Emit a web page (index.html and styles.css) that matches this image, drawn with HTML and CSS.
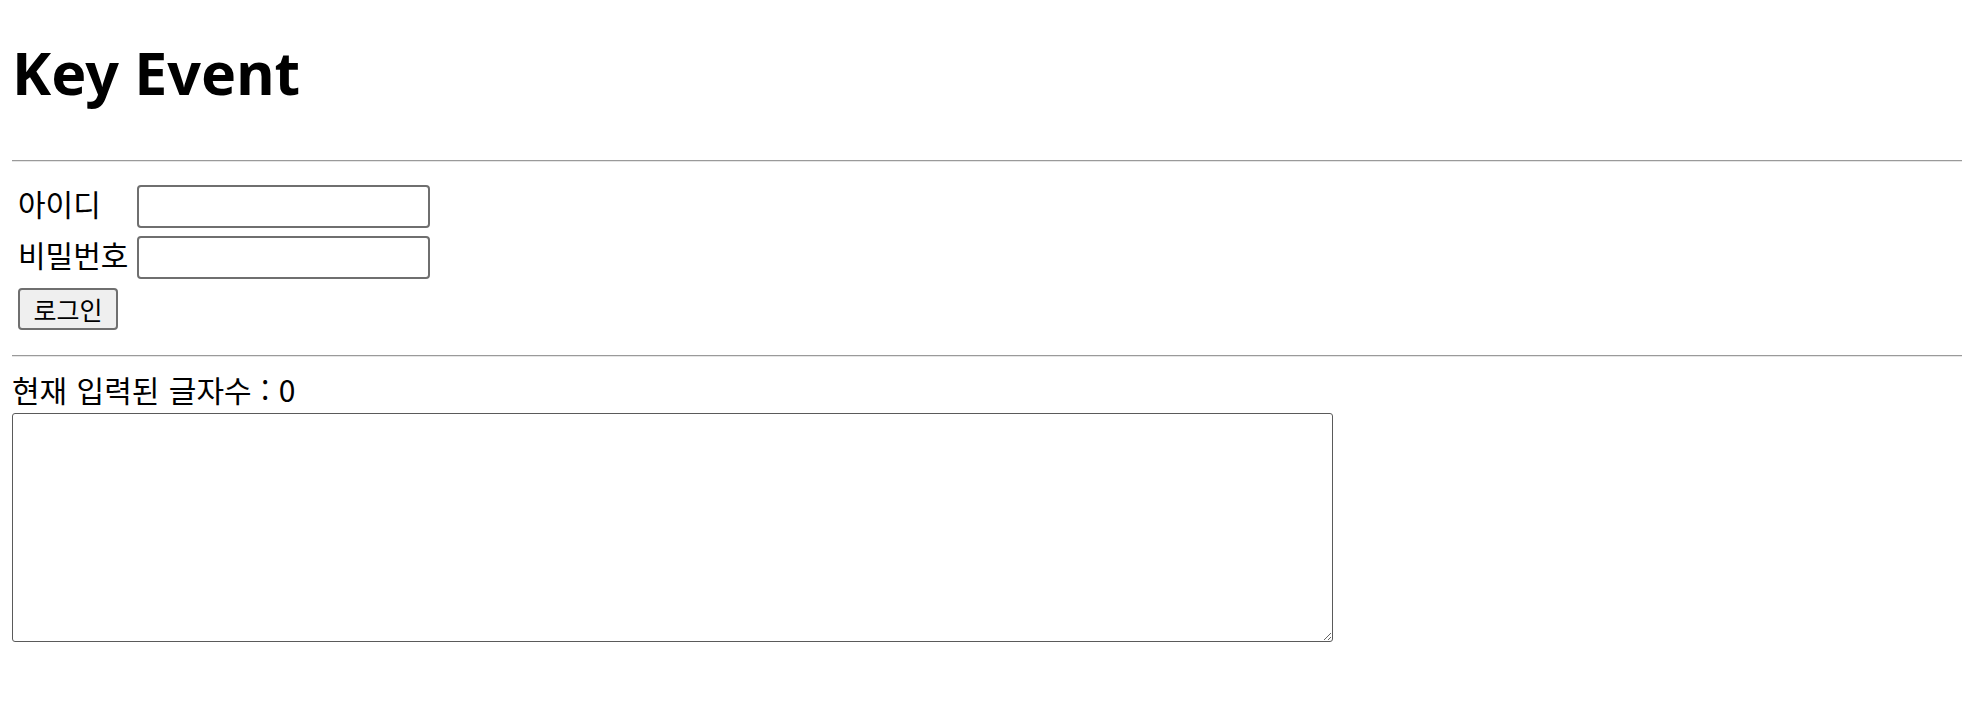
FILE: index.html
```html
<!DOCTYPE html>
<html lang="ko">
<head>
<meta charset="utf-8">
<title>Key Event</title>
<link rel="stylesheet" href="styles.css">
</head>
<body>
<h1 class="title">Key Event</h1>
<hr class="rule">
<form class="login">
  <label class="login-label" for="uid">아이디</label>
  <input class="login-input" id="uid" type="text">
  <label class="login-label" for="upw">비밀번호</label>
  <input class="login-input" id="upw" type="password">
  <button class="login-button" type="button">로그인</button>
</form>
<hr class="rule rule-second">
<div class="counter">현재 입력된 글자수 : 0</div>
<textarea class="memo"></textarea>
</body>
</html>
```

FILE: styles.css
```css
body {
  margin: 12px;
  font-family: "Noto Sans CJK KR", "Noto Sans", sans-serif;
  font-size: 30px;
  color: #000;
  background: #fff;
}

.title {
  margin: 20px 0 48px;
  font-family: "Noto Sans", "Noto Sans CJK KR", sans-serif;
  font-weight: 700;
  font-size: 59px;
  line-height: 80px;
}

.rule {
  margin: 0;
  height: 0;
  border: 0;
  border-top: 1px solid #9a9a9a;
  border-bottom: 1px solid #e6e6e6;
}

.login {
  display: grid;
  grid-template-columns: 113px 293px;
  column-gap: 6px;
  row-gap: 8px;
  padding: 23px 0 0 6px;
  margin: 0 0 25px;
  align-items: start;
}

.login-label {
  line-height: 37px;
  white-space: nowrap;
}

.login-input {
  box-sizing: border-box;
  width: 293px;
  height: 43px;
  margin: 0;
  border: 2px solid #6f6f6f;
  border-radius: 4px;
  background: #fff;
  font: inherit;
  font-size: 20px;
  padding: 0 4px;
}

.login-button {
  box-sizing: border-box;
  width: 100px;
  height: 42px;
  margin: 1px 0 0;
  padding: 0;
  border: 2px solid #6f6f6f;
  border-radius: 4px;
  background: #efefef;
  font-family: "Noto Sans CJK KR", sans-serif;
  font-size: 25px;
  color: #000;
  line-height: 1;
}

.counter {
  margin-top: 12px;
  line-height: 40px;
  word-spacing: 1px;
}

.memo {
  display: block;
  box-sizing: border-box;
  width: 1321px;
  height: 229px;
  margin: 4px 0 0;
  border: 1px solid #5a5a5a;
  border-radius: 3px;
  padding: 2px;
  font: inherit;
}
```
